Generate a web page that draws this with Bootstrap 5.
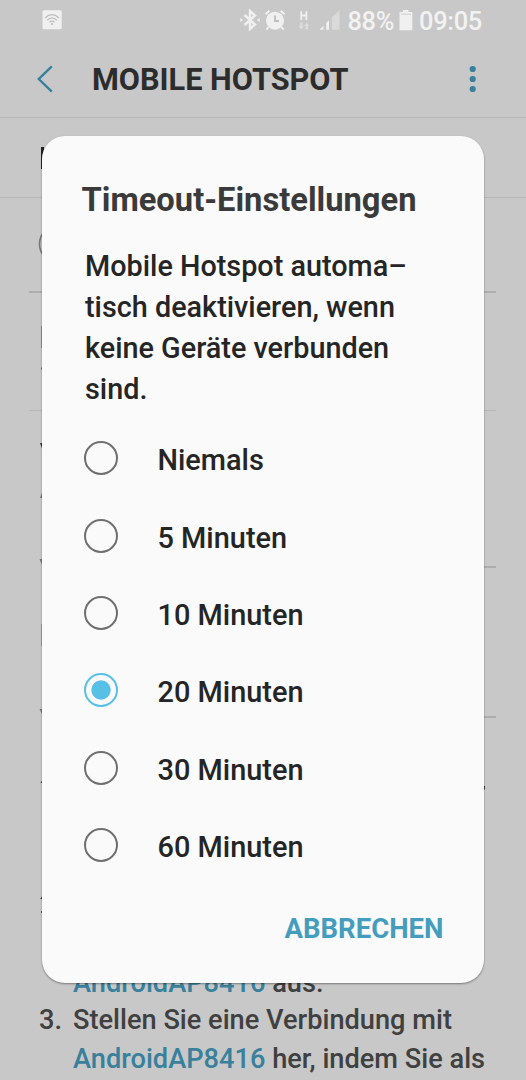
<!DOCTYPE html>
<html lang="de">
<head>
<meta charset="utf-8">
<meta name="viewport" content="width=device-width, initial-scale=1">
<title>Mobile Hotspot</title>
<link rel="stylesheet" href="https://cdn.jsdelivr.net/npm/bootstrap@5.3.0/dist/css/bootstrap.min.css">
<style>
body{font-family:Roboto,"Liberation Sans",sans-serif;background:#c8c8c8;color:#252525;font-weight:500}
.phone{width:526px;height:1080px}
svg{display:block;flex:none}
.statusbar{height:40px;padding:0 44px 0 42px;color:#f2f2f2;font-size:25.4px;letter-spacing:-.3px}
.statusbar span{line-height:40px;margin-top:1px}
.appbar{height:78px;padding:0 50px 0 37px;border-bottom:1px solid #b7b7b7}
.appbar h1{font-size:30.7px;line-height:40px;font-weight:700;margin:3px 0 0 39px;color:#2c2c2c}
.teal{color:#38809b}
.rule{border-bottom:1px solid #b7b7b7}
.inset{margin:0 30px 0 29px}
.inset-part{margin:0 30px 0 45px}
.inset-part svg{margin-left:-16px}
.rule-dark{border-bottom:2px solid #adadad}
.steps{font-size:27.2px;line-height:39.2px;color:#404040;margin-left:39px;padding-top:1.4px}
.steps .num{width:34px}
.steps .step-last{margin-top:-2.5px}
.dialog-box{left:42px;top:136px;width:441.5px;height:846.5px;border-radius:23px;background:#fafafa;box-shadow:0 1px 2px rgba(0,0,0,.4);padding:44px 40px 0}
.dialog-box h2{font-size:32.7px;line-height:40px;font-weight:700;color:#3a3a3a;margin:0 0 0 -.5px}
.message{font-size:28.8px;line-height:40.9px;margin:26px 0 0 3px}
.choices{margin:10px 0 0 1.5px}
.choice{height:77.35px}
.choice span{font-size:28.9px;line-height:40px;margin:4px 0 0 39px}
.choice input{appearance:none;width:34px;height:34px;border:2px solid #6f6f6f;border-radius:50%;margin:0 .5px;background:transparent;flex:none}
.choice input:checked{border:2.5px solid #56c0e6;background:radial-gradient(circle,#56c0e6 9.2px,transparent 10px)}
.cancel{border:0;background:none;color:#459dbe;font-size:27.5px;line-height:40px;font-weight:700;padding:0;margin-top:25px}
</style>
<script src="https://cdn.jsdelivr.net/npm/bootstrap@5.3.0/dist/js/bootstrap.bundle.min.js"></script>
</head>
<body>
<div class="phone position-relative overflow-hidden d-flex flex-column">
  <header class="statusbar d-flex align-items-center flex-shrink-0">
    <svg width="20" height="20" viewBox="0 0 20 20"><rect x=".5" y=".3" width="19.2" height="19" rx="1.5" fill="#f0f0f0"/><g fill="none" stroke="#bdbdbd" stroke-width="1.2"><path d="M3 8Q10 1.4 17 8M5.2 10.3Q10 5.6 14.8 10.3M7.5 12.3Q10 10 12.5 12.3"/></g><circle cx="10" cy="14" r="1.1" fill="#bdbdbd"/></svg>
    <svg class="ms-auto" width="20" height="22" viewBox="0 0 20 22"><path d="M4.5 6L15 15.5L10 20V2L15 6.5L4.5 16" fill="none" stroke="#f0f0f0" stroke-width="2.4"/><path d="M.3 9L3.2 11L.3 13ZM19.7 9L16.8 11L19.7 13Z" fill="#f0f0f0"/></svg>
    <svg width="22" height="22" viewBox="0 0 22 22" style="margin-left:4px"><circle cx="11" cy="11.7" r="9" fill="#f0f0f0"/><path d="M1.5 5.3L5.3 1.8M20.5 5.3L16.7 1.8M4.5 18L2.5 20.7M17.5 18L19.5 20.7" stroke="#f0f0f0" stroke-width="2"/><path d="M11 6.5V12H15" fill="none" stroke="#bdbdbd" stroke-width="1.8"/></svg>
    <svg width="12" height="22" viewBox="0 0 12 22" style="margin-left:12px"><path d="M3.2 2.2V11M8.4 2.2V11M3.2 6.5H8.4" stroke="#f0f0f0" stroke-width="1.8"/><path d="M2.2 13.5H4.4V17H6L3.3 20.5L.6 17H2.2ZM7.6 20.5H9.8V17H11.4L8.7 13.5L6 17H7.6Z" fill="#dcdcdc"/></svg>
    <svg width="22" height="22" viewBox="0 0 22 22" style="margin-left:9px"><path d="M.5 20.8L4.5 16.8V20.8ZM7.2 14L10 11.2V20.8H7.2Z" fill="#f0f0f0"/><path d="M12.8 8.5L20.5 1V20.8H12.8Z" fill="#dadada"/></svg>
    <span style="margin-left:6px">88%</span>
    <svg width="14" height="21" viewBox="0 0 14 21" style="margin-left:5px"><path d="M4 0H9.5V2H13.3V20.3H.5V2H4Z" fill="#f0f0f0"/><path d="M2 4.2H12" stroke="#cfcfcf" stroke-width="1"/></svg>
    <span style="margin-left:6px">09:05</span>
  </header>
  <nav class="appbar d-flex align-items-center flex-shrink-0">
    <svg width="16" height="28" viewBox="0 0 16 28"><path d="M14.8 1.3L1.8 14L14.8 26.7" fill="none" stroke="#38809b" stroke-width="2.4"/></svg>
    <h1>MOBILE HOTSPOT</h1>
    <svg class="ms-auto" width="7" height="28" viewBox="0 0 7 28" fill="#38809b"><circle cx="3.7" cy="4" r="3.1"/><circle cx="3.7" cy="14" r="3.1"/><circle cx="3.7" cy="24" r="3.1"/></svg>
  </nav>
  <main>
    <section class="rule" style="height:80px"><svg width="60" height="79"><path d="M42.5 29V51" stroke="#222" stroke-width="3"/></svg></section>
    <section class="inset rule-dark" style="height:95px"><svg width="50" height="90"><circle cx="29" cy="46" r="18.5" fill="none" stroke="#777" stroke-width="1.6"/></svg></section>
    <section class="inset rule" style="height:118px"><svg width="30" height="100"><path d="M12.8 33V55" stroke="#888" stroke-width="1.4"/><path d="M12.5 74.5V76.5" stroke="#38809b" stroke-width="1"/></svg></section>
    <section class="inset-part rule-dark" style="height:157px"><svg width="30" height="155"><path d="M11 32H14V40Z" fill="#333"/><path d="M11 87L14 79V87Z" fill="#777"/><path d="M10.5 148H14V156Z" fill="#777"/></svg></section>
    <section class="inset-part rule-dark" style="height:150px"><svg width="30" height="148"><path d="M12.8 56V78" stroke="#999" stroke-width="1.4"/><path d="M10.5 141H14V148Z" fill="#777"/></svg></section>
    <div style="height:245px"><svg width="526" height="245"><path d="M41.5 63.5V65M484.3 68V71.5M40.8 181L43 178.5M41 194H43" stroke="#444" stroke-width="1.4"/></svg></div>
    <div class="steps text-nowrap">
      <div class="d-flex"><span class="num"></span><span><span class="teal">AndroidAP8416</span> aus.</span></div>
      <div class="d-flex step-last"><span class="num">3.</span><span>Stellen Sie eine Verbindung mit<br><span class="teal">AndroidAP8416</span> her, indem Sie als</span></div>
    </div>
  </main>
  <div class="dialog-box position-absolute" role="dialog">
    <h2 class="text-nowrap">Timeout-Einstellungen</h2>
    <p class="message text-nowrap">Mobile Hotspot automa–<br>tisch deaktivieren, wenn<br>keine Geräte verbunden<br>sind.</p>
    <div class="choices">
      <label class="choice d-flex align-items-center"><input type="radio" name="t"><span>Niemals</span></label>
      <label class="choice d-flex align-items-center"><input type="radio" name="t"><span>5 Minuten</span></label>
      <label class="choice d-flex align-items-center"><input type="radio" name="t"><span>10 Minuten</span></label>
      <label class="choice d-flex align-items-center"><input type="radio" name="t" checked><span>20 Minuten</span></label>
      <label class="choice d-flex align-items-center"><input type="radio" name="t"><span>30 Minuten</span></label>
      <label class="choice d-flex align-items-center"><input type="radio" name="t"><span>60 Minuten</span></label>
    </div>
    <div class="d-flex justify-content-end"><button class="cancel">ABBRECHEN</button></div>
  </div>
</div>
</body>
</html>
